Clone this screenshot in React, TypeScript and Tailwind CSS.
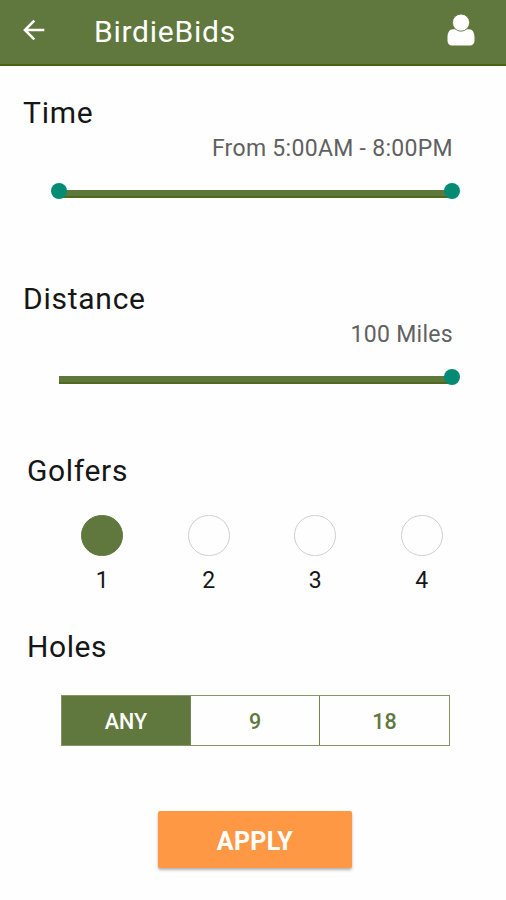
import { useState } from "react";

const golferCounts = [1, 2, 3, 4];
const holeOptions = ["ANY", "9", "18"];

function Header() {
  return (
    <header className="flex h-[66px] items-center justify-between border-b-2 border-[#4a6510] bg-[#60783e] pr-[31px] pb-1 pl-[23px] text-white">
      <div className="flex items-center">
        <button aria-label="Back">
          <svg width="22" height="22" viewBox="0 0 22 22" fill="none" stroke="currentColor" strokeWidth="2.5">
            <path d="M21.3 11H2.2M11.3 1.6L1.9 11l9.4 9.4" />
          </svg>
        </button>
        <h1 className="ml-[49px] pt-[3px] text-[30px] leading-9 tracking-[0.75px]">BirdieBids</h1>
      </div>
      <button aria-label="Profile">
        <svg width="28" height="32" viewBox="0 0 28 32" fill="currentColor">
          <path d="M6 15.2h16c3.600 0 5.500 3 5.500 8.500v2.800c0 3-2 5-5 5h-17c-3 0-5-2-5-5v-2.800c0-5.500 1.900-8.500 5.500-8.500z" />
          <circle cx="14" cy="8.600" r="8.600" stroke="#60783e" strokeWidth="0.9" />
        </svg>
      </button>
    </header>
  );
}

function Knob({ className }: { className: string }) {
  return <span className={`absolute -top-[7px] size-4 rounded-full bg-[#058a74] ${className}`} />;
}

function RangeFilter({ title, value, range }: { title: string; value: string; range?: boolean }) {
  return (
    <section className="h-[186px]">
      <h2 className="pl-[23px] text-[30px] leading-9 tracking-[0.75px]">{title}</h2>
      <p className="pt-px pr-[53px] text-right text-[23px] leading-[34px] tracking-[0.3px] text-[#616161]">{value}</p>
      <div className="relative mt-6 mr-[54px] ml-[59px] h-2 border-b-2 border-[#50691c] bg-[#5d783a]">
        {range && <Knob className="-left-2" />}
        <Knob className="-right-2" />
      </div>
    </section>
  );
}

export default function App() {
  const [golfers, setGolfers] = useState(1);
  const [holes, setHoles] = useState("ANY");

  return (
    <div className="h-[900px] w-[506px] overflow-hidden bg-[#fefefe] font-['Roboto',sans-serif] text-[#161616]">
      <Header />
      <main className="pt-[29px]">
        <RangeFilter title="Time" value="From 5:00AM - 8:00PM" range />
        <RangeFilter title="Distance" value="100 Miles" />

        <section className="-mt-[14px] h-[176px]">
          <h2 className="pl-[27px] text-[30px] leading-9 tracking-[0.65px]">Golfers</h2>
          <div className="mt-[26px] ml-[49px] flex">
            {golferCounts.map((count) => (
              <button
                key={count}
                onClick={() => setGolfers(count)}
                className="flex w-[106.5px] flex-col items-center"
              >
                <span
                  className={`h-[41px] w-[42px] rounded-full border ${
                    golfers === count ? "border-[#60783e] bg-[#60783e]" : "border-[#cfcfcf]"
                  }`}
                />
                <span className="mt-[11px] text-[23px] leading-7">{count}</span>
              </button>
            ))}
          </div>
        </section>

        <section>
          <h2 className="pl-[27px] text-[30px] leading-9 tracking-[0.6px]">Holes</h2>
          <div className="mt-[30px] ml-[61px] grid h-[51px] w-[389px] grid-cols-[129px_129px_129px] divide-x divide-[#71854d] border border-[#83936a]">
            {holeOptions.map((option) => (
              <button
                key={option}
                onClick={() => setHoles(option)}
                className={`pt-1 text-[21.5px] font-medium ${
                  holes === option ? "bg-[#60783e] text-white" : "text-[#60783e]"
                }`}
              >
                {option}
              </button>
            ))}
          </div>
        </section>

        <button className="mt-[65px] ml-[158px] block h-[57px] w-[194px] rounded-[2px] bg-[#ff9844] pt-1 text-[25px] font-bold tracking-[0.3px] text-white shadow-[0_2px_3px_rgba(0,0,0,0.3)]">
          APPLY
        </button>
      </main>
    </div>
  );
}
